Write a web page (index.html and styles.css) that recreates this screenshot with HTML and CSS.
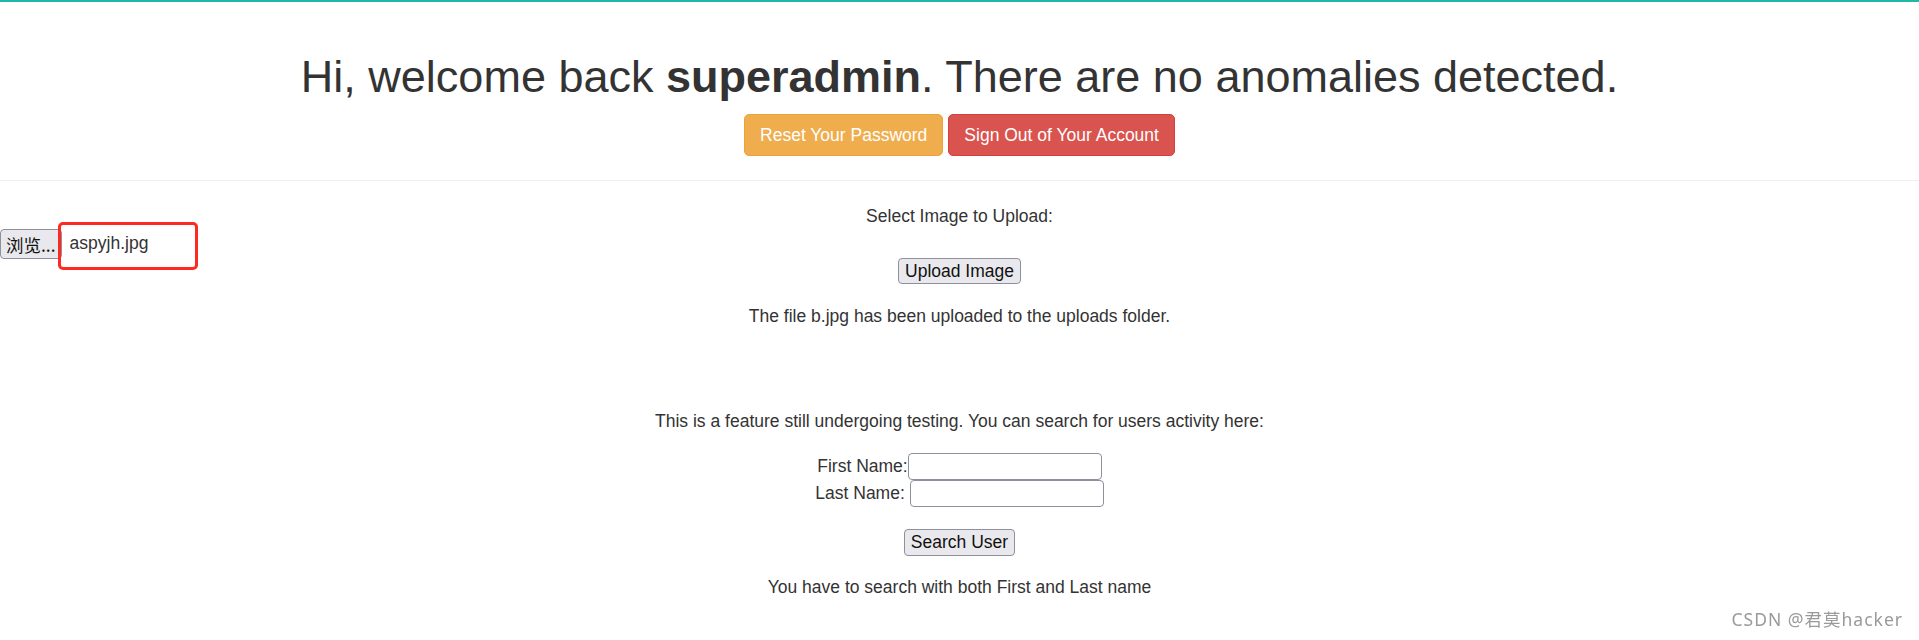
FILE: index.html
```html
<!DOCTYPE html>
<html lang="en">
<head>
    <meta charset="UTF-8">
    <meta name="viewport" content="width=device-width, initial-scale=1.0">
    <title>Dashboard</title>
    <link rel="stylesheet" href="styles.css">
</head>
<body>
    <div class="topline"></div>

    <div class="welcome">
        <h1>Hi, welcome back <b>superadmin</b>. There are no anomalies detected.</h1>
        <div class="actions">
            <a href="#" class="btn btn-warning">Reset Your Password</a>
            <a href="#" class="btn btn-danger">Sign Out of Your Account</a>
        </div>
    </div>

    <hr>

    <!-- image upload -->
    <form class="upload">
        <p>Select Image to Upload:</p>
        <div class="file-picker">
            <span class="ff-btn file-btn">浏览...</span>
            <span class="file-name">aspyjh.jpg</span>
            <span class="mark"></span>
        </div>
        <button type="button" class="ff-btn">Upload Image</button>
        <p class="result">The file b.jpg has been uploaded to the uploads folder.</p>
    </form>

    <!-- user search -->
    <form class="search">
        <p>This is a feature still undergoing testing. You can search for users activity here:</p>
        <div class="fields">
            <div class="field-row"><label for="firstName">First Name:</label><input type="text" id="firstName"></div>
            <div class="field-row"><label for="lastName">Last Name:&nbsp;</label><input type="text" id="lastName"></div>
        </div>
        <button type="button" class="ff-btn">Search User</button>
        <p class="result">You have to search with both First and Last name</p>
    </form>

    <div class="watermark">CSDN @君莫hacker</div>
</body>
</html>
```

FILE: styles.css
```css
body {
    margin: 0;
    font-family: "Liberation Sans", Arial, "Noto Sans CJK SC", sans-serif;
    font-size: 17.5px;
    line-height: 25px;
    color: #333;
    background: #fff;
}

.topline {
    height: 2px;
    background: #1fb8a8;
}

.welcome {
    text-align: center;
}

h1 {
    margin: 50px 0 12.5px;
    font-size: 45px;
    font-weight: 500;
    line-height: 49.5px;
}

.actions {
    display: flex;
    justify-content: center;
    gap: 5px;
}

.btn {
    display: inline-block;
    padding: 7.5px 15px;
    border: 1px solid transparent;
    border-radius: 5px;
    color: #fff;
    text-decoration: none;
    line-height: 25px;
}

.btn-warning {
    background-color: #f0ad4e;
    border-color: #eea236;
}

.btn-danger {
    background-color: #d9534f;
    border-color: #d43f3a;
}

hr {
    margin: 24px 0 23px;
    border: 0;
    border-top: 1px solid #eee;
}

p {
    margin: 0;
}

.upload,
.search {
    display: flex;
    flex-direction: column;
    align-items: center;
    text-align: center;
}

.ff-btn {
    box-sizing: border-box;
    height: 27px;
    padding: 0 6px;
    font-family: inherit;
    font-size: 17.5px;
    line-height: 25px;
    color: #111;
    background: #e9e9ed;
    border: 1px solid #8f8f9d;
    border-radius: 4px;
}

.upload > .ff-btn {
    height: 26px;
}

.file-picker {
    position: relative;
    align-self: flex-start;
    display: flex;
    align-items: center;
    height: 29px;
}

.file-btn {
    height: 30px;
    padding: 2px 5px 0;
    font-family: "Noto Sans CJK SC", sans-serif;
    line-height: 26px;
}

.file-name {
    margin-left: 8px;
    color: #333;
}

/* red annotation box over the file name */
.mark {
    position: absolute;
    left: 58px;
    top: -7px;
    box-sizing: border-box;
    width: 140px;
    height: 48px;
    border: 3px solid #ff2a1f;
    border-radius: 5px;
}

.upload .result {
    margin-top: 20px;
}

.search {
    margin-top: 80px;
}

.fields {
    margin: 19px 0 22px;
}

.field-row {
    display: flex;
    align-items: center;
    justify-content: center;
}

.field-row input {
    box-sizing: border-box;
    width: 194px;
    height: 27px;
    padding: 2px 4px;
    font-family: inherit;
    font-size: 17.5px;
    border: 1px solid #8f8f9d;
    border-radius: 4px;
}

.search .result {
    margin-top: 19px;
}

.watermark {
    position: fixed;
    right: 16px;
    bottom: 8px;
    font-family: "Noto Sans", "Noto Sans CJK SC", sans-serif;
    font-size: 17.5px;
    letter-spacing: 1px;
    color: #9a9a9a;
    text-shadow: 0 0 1px #fff;
}
```
